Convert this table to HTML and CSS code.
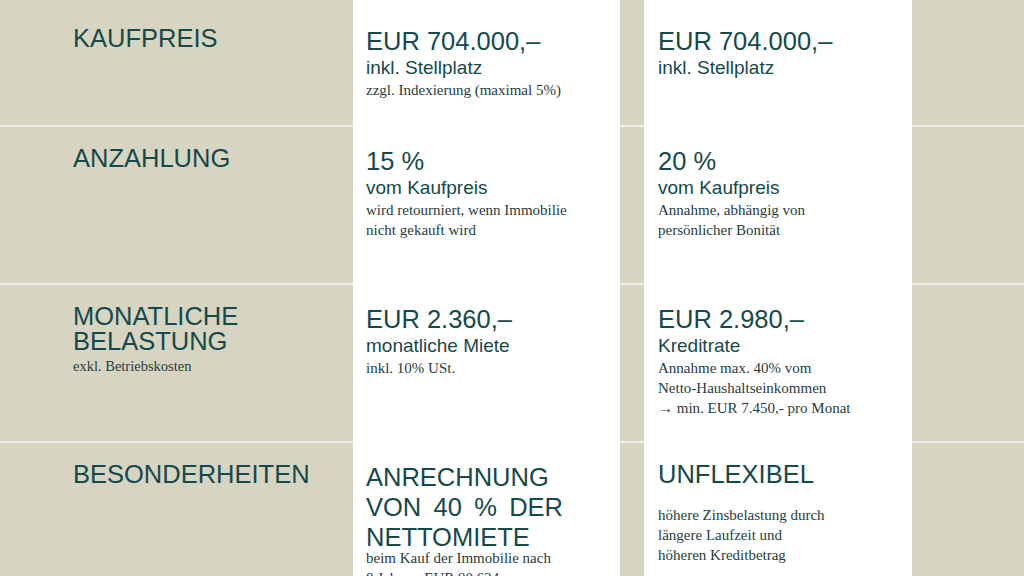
FILE: index.html
```html
<!DOCTYPE html>
<html lang="de">
<head>
<meta charset="utf-8">
<title>Vergleich Kaufpreis</title>
<link rel="stylesheet" href="styles.css">
</head>
<body>
<div class="table">
  <div class="row row-first">
    <div class="cell label"><div class="big-label">KAUFPREIS</div></div>
    <div class="cell val">
      <div class="big">EUR 704.000,–</div>
      <div class="sub">inkl. Stellplatz</div>
      <div class="note">zzgl. Indexierung (maximal 5%)</div>
    </div>
    <div class="cell gap"></div>
    <div class="cell val val2">
      <div class="big">EUR 704.000,–</div>
      <div class="sub">inkl. Stellplatz</div>
    </div>
    <div class="cell end"></div>
  </div>

  <div class="row">
    <div class="cell label"><div class="big-label">ANZAHLUNG</div></div>
    <div class="cell val">
      <div class="big">15 %</div>
      <div class="sub">vom Kaufpreis</div>
      <div class="note">wird retourniert, wenn Immobilie<br>nicht gekauft wird</div>
    </div>
    <div class="cell gap"></div>
    <div class="cell val val2">
      <div class="big">20 %</div>
      <div class="sub">vom Kaufpreis</div>
      <div class="note">Annahme, abhängig von<br>persönlicher Bonität</div>
    </div>
    <div class="cell end"></div>
  </div>

  <div class="row">
    <div class="cell label">
      <div class="big-label">MONATLICHE<br>BELASTUNG</div>
      <div class="label-note">exkl. Betriebskosten</div>
    </div>
    <div class="cell val">
      <div class="big">EUR 2.360,–</div>
      <div class="sub">monatliche Miete</div>
      <div class="note">inkl. 10% USt.</div>
    </div>
    <div class="cell gap"></div>
    <div class="cell val val2">
      <div class="big">EUR 2.980,–</div>
      <div class="sub">Kreditrate</div>
      <div class="note">Annahme max. 40% vom<br>Netto-Haushaltseinkommen<br>→ min. EUR 7.450,- pro Monat</div>
    </div>
    <div class="cell end"></div>
  </div>

  <div class="row row-last">
    <div class="cell label"><div class="big-label">BESONDERHEITEN</div></div>
    <div class="cell val">
      <div class="big justify">ANRECHNUNG VON 40 % DER NETTOMIETE</div>
      <div class="note note-tight">beim Kauf der Immobilie nach<br>8 Jahren: EUR 90.624,–</div>
    </div>
    <div class="cell gap"></div>
    <div class="cell val val2">
      <div class="big big-up">UNFLEXIBEL</div>
      <div class="note note-spaced">höhere Zinsbelastung durch<br>längere Laufzeit und<br>höheren Kreditbetrag</div>
    </div>
    <div class="cell end"></div>
  </div>
</div>
</body>
</html>
```

FILE: styles.css
```css
html, body {
  margin: 0;
  padding: 0;
  background: #d7d5c1;
  overflow: hidden;
}

body {
  width: 1024px;
  height: 576px;
  font-family: "Liberation Sans", Arial, sans-serif;
  color: #15494a;
}

.table {
  display: flex;
  flex-direction: column;
}

.row {
  display: grid;
  grid-template-columns: 353px 267px 24px 268px 1fr;
  height: 158px;
}

.row-first {
  height: 127px;
}

.row-last {
  height: 200px;
}

.cell {
  box-sizing: border-box;
  border-bottom: 2px solid #efeee6;
  padding-top: 19px;
}

.row-first .cell {
  padding-top: 26px;
}

.label {
  background: #d7d5c1;
  padding-left: 73px;
}

.gap,
.end {
  background: #d7d5c1;
}

.val {
  background: #ffffff;
  border-bottom-color: #ffffff;
  padding-left: 13px;
}

.val2 {
  padding-left: 14px;
}

.big-label {
  font-size: 25.5px;
  line-height: 25px;
}

.label-note {
  font-family: "Liberation Serif", "Times New Roman", serif;
  font-size: 14.5px;
  line-height: 20px;
  margin-top: 2px;
  color: #1f3d3d;
}

.big {
  font-size: 25.5px;
  line-height: 30px;
}

.big-up {
  margin-top: -3px;
}

.justify {
  width: 197px;
  text-align: justify;
}

.sub {
  font-size: 19px;
  line-height: 24px;
}

.note {
  font-family: "Liberation Serif", "Times New Roman", serif;
  font-size: 15px;
  line-height: 20px;
  color: #1f3d3d;
  white-space: nowrap;
}

.note-tight {
  margin-top: -4px;
}

.note-spaced {
  margin-top: 16px;
}
```
